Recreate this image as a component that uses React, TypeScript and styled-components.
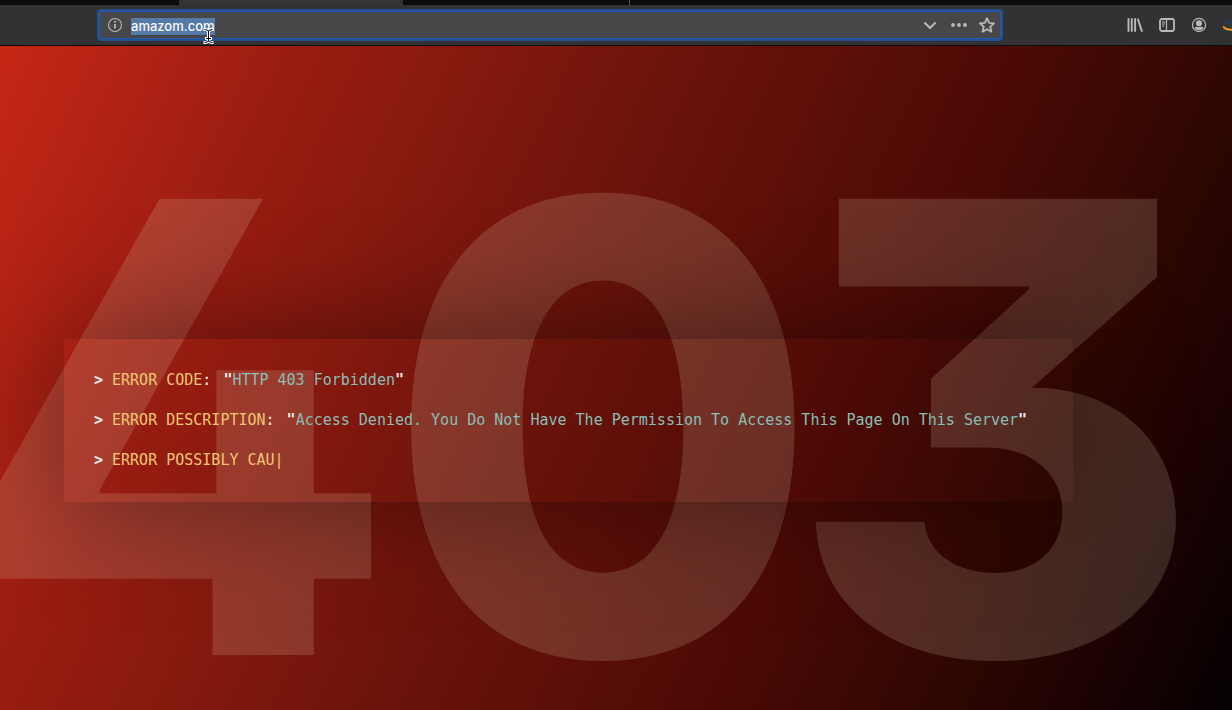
import React from "react";
import styled, { createGlobalStyle } from "styled-components";

const GlobalStyle = createGlobalStyle`
  * { box-sizing: border-box; }
  html, body { margin: 0; height: 100%; background: #000; }
  #root { height: 100%; }
`;

const Browser = styled.div`
  display: flex;
  flex-direction: column;
  min-height: 100%;
  overflow: hidden;
  font-family: Inter, "Liberation Sans", sans-serif;
`;

const TabStrip = styled.div`
  display: flex;
  height: 5px;
  padding-left: 179px;
  background: #0b0a0d;
`;

const Tab = styled.div<{ $active?: boolean }>`
  width: ${(p) => (p.$active ? 224 : 227)}px;
  background: ${(p) => (p.$active ? "#343436" : "transparent")};
  border-right: ${(p) => (p.$active ? "none" : "1px solid #5a5a5c")};
`;

const Toolbar = styled.header`
  position: relative;
  display: flex;
  align-items: center;
  height: 41px;
  padding-left: 97px;
  background: #323234;
  border-bottom: 1px solid #0c0c0d;
  overflow: hidden;
`;

const UrlBar = styled.div`
  flex: 1;
  display: flex;
  align-items: center;
  height: 32px;
  padding: 0 6px 0 8px;
  background: #474749;
  border: 2px solid #264f8c;
  border-radius: 4px;
  box-shadow: inset 0 0 0 1px #1c5cb8;
`;

const UrlInput = styled.input`
  field-sizing: content;
  height: 17px;
  margin: 2px auto 0 8px;
  padding: 0;
  border: 0;
  outline: 0;
  background: #557aa8;
  color: #f9f9fa;
  font: 500 13px/17px Inter, "Liberation Sans", sans-serif;
`;

const IconButton = styled.button`
  display: flex;
  align-items: center;
  justify-content: center;
  width: 16px;
  height: 16px;
  padding: 0;
  border: 0;
  background: none;
  color: #b9b9ba;
`;

const UrlActions = styled.div`
  display: flex;
  gap: 12px;
`;

const ToolActions = styled.div`
  display: flex;
  flex: none;
  gap: 16px;
  width: 229px;
  padding-left: 124px;

  ${IconButton} {
    flex: none;
  }
`;

const Pointer = styled.svg`
  position: absolute;
  left: 203px;
  top: 22px;
`;

const Page = styled.main`
  flex: 1;
  display: grid;
  grid-template-columns: minmax(0, 1fr);
  align-items: center;
  overflow: hidden;
  background: linear-gradient(
    115deg,
    #c62716 0%,
    #981c11 20%,
    #8a1a0f 28%,
    #6c140b 44%,
    #4c0a05 66%,
    #2c0602 82%,
    #1a0203 91%,
    #040001 100%
  );
`;

const StatusCode = styled.h1`
  grid-area: 1 / 1;
  display: grid;
  grid-template-columns: minmax(0, 446fr) minmax(0, 400fr) minmax(0, 384fr);
  justify-items: center;
  margin: 97px 45px 0 -43px;
  color: rgba(240, 232, 200, 0.16);
  font: 800 627px/568px Inter, sans-serif;
  font-feature-settings: "cv09", "cv02";
`;

const Terminal = styled.section`
  grid-area: 1 / 1;
  display: grid;
  gap: 17px;
  margin: 84px 159px 0 64px;
  padding: 30px;
  box-shadow: 0 0 120px rgba(0, 0, 0, 0.4);
  color: #f4efec;
  font: 15px/23px "DejaVu Sans Mono", monospace;
`;

const Line = styled.p`
  display: flex;
  margin: 0;
  white-space: pre;
`;

const Label = styled.span`
  margin: 0 0 0 9px;
`;

const Key = styled.span`
  color: #f0c674;
`;

const Value = styled.span`
  margin-left: 12px;
  color: #8abeb7;
`;

const Prompt = styled.b`
  color: #f4efec;
  font-weight: 700;
`;

const InfoIcon = () => (
  <svg width="16" height="16" viewBox="0 0 16 16" fill="none" stroke="currentColor">
    <circle cx="8" cy="8" r="6.5" strokeWidth="1.1" />
    <path d="M8 7v4.5" strokeWidth="1.8" />
    <circle cx="8" cy="4.7" r="1" fill="currentColor" stroke="none" />
  </svg>
);

const ChevronIcon = () => (
  <svg width="16" height="16" viewBox="0 0 16 16" fill="none" stroke="currentColor" strokeWidth="2" strokeLinecap="round" strokeLinejoin="round">
    <path d="M2 6l5 5 5-5" />
  </svg>
);

const DotsIcon = () => (
  <svg width="16" height="16" viewBox="0 0 16 16" fill="currentColor">
    <circle cx="2" cy="8" r="1.9" />
    <circle cx="8" cy="8" r="1.9" />
    <circle cx="14" cy="8" r="1.9" />
  </svg>
);

const StarIcon = () => (
  <svg width="16" height="16" viewBox="0 0 16 16" fill="none" stroke="currentColor" strokeWidth="1.8" strokeLinejoin="round">
    <path d="M8 1.200l2.100 4.600 5 .5-3.800 3.400 1.100 5L8 12.200l-4.400 2.500 1.100-5L.9 6.300l5-.5z" />
  </svg>
);

const LibraryIcon = () => (
  <svg width="16" height="16" viewBox="0 0 16 16" fill="none" stroke="currentColor" strokeWidth="1.9" strokeLinecap="round">
    <path d="M1.500 2v12M4.800 2v12M8.100 2v12M11 2.500l3.800 11.500" />
  </svg>
);

const SidebarIcon = () => (
  <svg width="16" height="16" viewBox="0 0 16 16" fill="none" stroke="currentColor">
    <rect x="1" y="2" width="14" height="12" rx="2" strokeWidth="1.8" />
    <path d="M7.500 2v12" strokeWidth="1.2" />
    <path d="M3 5h3M3 7h3M3 9h2" strokeWidth="1" />
  </svg>
);

const AccountIcon = () => (
  <svg width="16" height="16" viewBox="0 0 16 16">
    <circle cx="8" cy="8" r="6.6" fill="none" stroke="currentColor" strokeWidth="1.2" />
    <circle cx="8" cy="6.3" r="3" fill="currentColor" />
    <path d="M3.500 11c1.200-1.500 2.200-1.200 4.500-.9 2.300-.3 3.300-.6 4.500.9-1 1.500-2.700 2.300-4.500 2.300S4.500 12.500 3.500 11z" fill="currentColor" />
  </svg>
);

const ShopIcon = () => (
  <svg width="16" height="16" viewBox="0 0 16 16" fill="none">
    <path d="M2 3h12v4H2z" fill="#2b3750" />
    <path d="M0 9.500c3 4 11 4.500 15 1" stroke="#f09a22" strokeWidth="2" />
  </svg>
);

const beam = "M2 2.500q3 0 3.500 2q.5-2 3.500-2M5.500 4v10M2 15.500q3 0 3.500-2q.5 2 3.500 2M3.500 11.500h4";

const TextCursor = () => (
  <Pointer width="12" height="18" viewBox="0 0 12 18" fill="none" strokeLinecap="square" aria-hidden="true">
    <path d={beam} stroke="#fff" strokeWidth="3" />
    <path d={beam} stroke="#000" strokeWidth="1" />
  </Pointer>
);

export default function App() {
  return (
    <Browser>
      <GlobalStyle />
      <TabStrip>
        <Tab $active />
        <Tab />
      </TabStrip>
      <Toolbar>
        <UrlBar>
          <IconButton aria-label="Site information"><InfoIcon /></IconButton>
          <UrlInput aria-label="Address" defaultValue="amazom.com" spellCheck={false} />
          <UrlActions>
            <IconButton aria-label="Show history"><ChevronIcon /></IconButton>
            <IconButton aria-label="Page actions"><DotsIcon /></IconButton>
            <IconButton aria-label="Bookmark this page"><StarIcon /></IconButton>
          </UrlActions>
        </UrlBar>
        <ToolActions>
          <IconButton aria-label="Library"><LibraryIcon /></IconButton>
          <IconButton aria-label="Sidebars"><SidebarIcon /></IconButton>
          <IconButton aria-label="Account"><AccountIcon /></IconButton>
          <IconButton aria-label="Shopping assistant"><ShopIcon /></IconButton>
        </ToolActions>
        <TextCursor />
      </Toolbar>
      <Page>
        <StatusCode>
          <span>4</span>
          <span>0</span>
          <span>3</span>
        </StatusCode>
        <Terminal>
          <Line>
            <Prompt>&gt;</Prompt>
            <Label><Key>ERROR CODE</Key>:</Label>
            <Value><Prompt>"</Prompt>HTTP 403 Forbidden<Prompt>"</Prompt></Value>
          </Line>
          <Line>
            <Prompt>&gt;</Prompt>
            <Label><Key>ERROR DESCRIPTION</Key>:</Label>
            <Value>
              <Prompt>"</Prompt>Access Denied. You Do Not Have The Permission To Access This Page On This Server<Prompt>"</Prompt>
            </Value>
          </Line>
          <Line>
            <Prompt>&gt;</Prompt>
            <Label><Key>ERROR POSSIBLY CAU|</Key></Label>
          </Line>
        </Terminal>
      </Page>
    </Browser>
  );
}
